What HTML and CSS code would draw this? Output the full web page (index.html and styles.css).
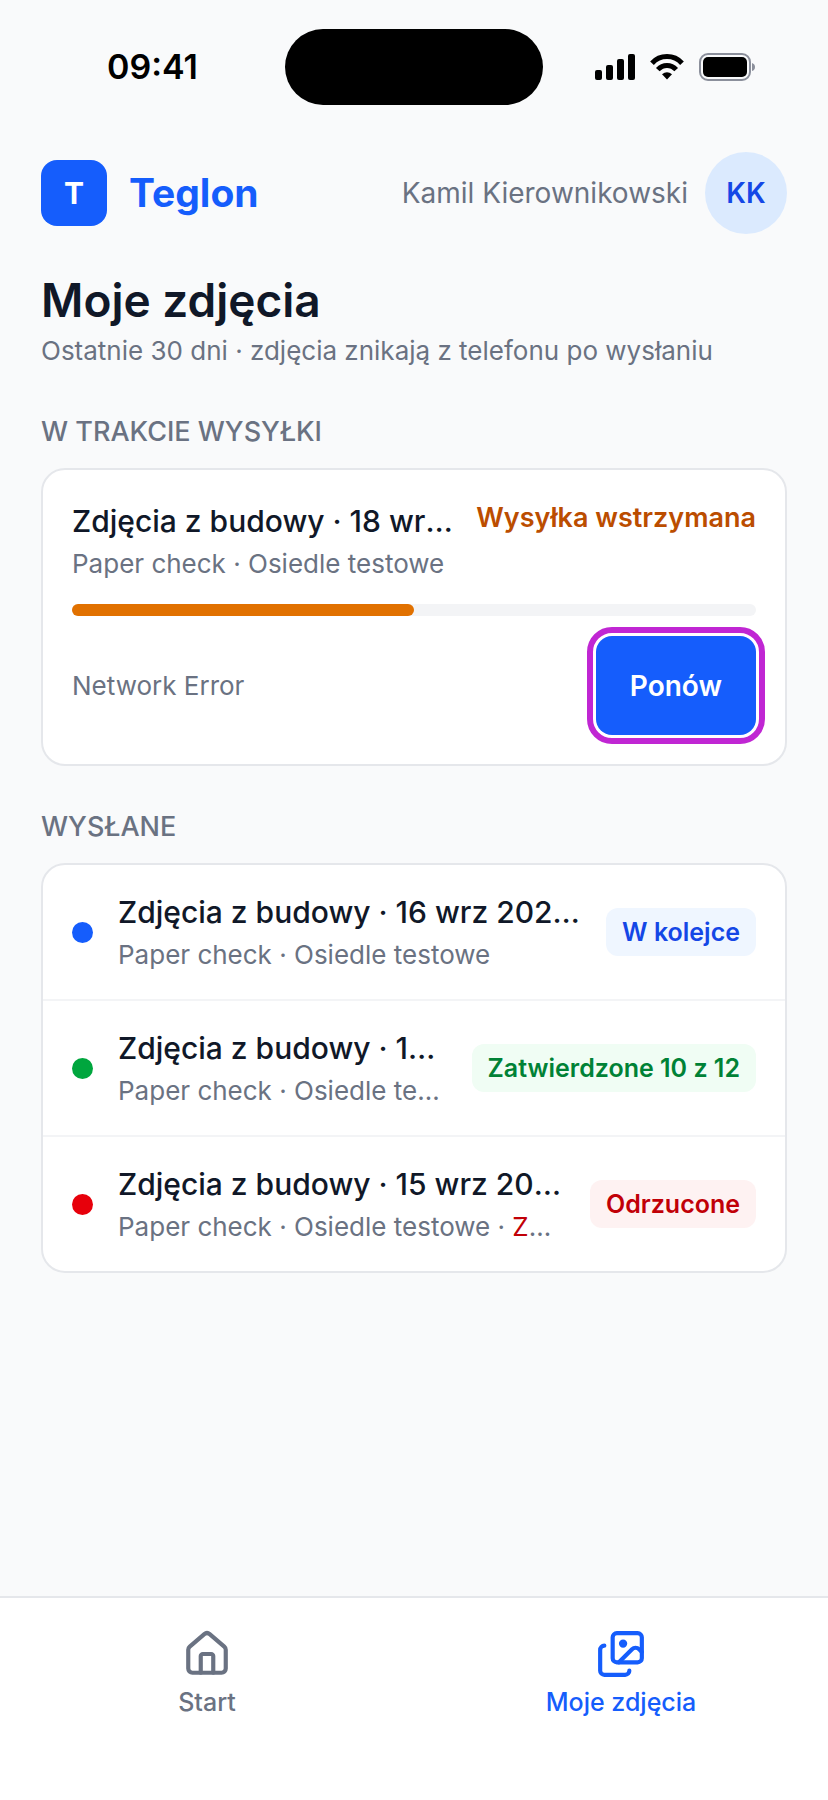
FILE: index.html
```html
<!doctype html>
<html lang="pl">

<head>
	<meta charset="utf-8">
	<meta name="viewport" content="width=device-width, initial-scale=1">
	<title>Moje zdjęcia</title>
	<link rel="stylesheet" href="styles.css">
</head>

<body>
	<div class="status-bar">
		<span class="status-time">09:41</span>
		<div class="island"></div>
		<div class="status-icons">
			<svg width="40" height="26" viewBox="0 0 40 26" fill="#000">
				<rect x="0" y="16" width="7" height="10" rx="2"/>
				<rect x="11" y="11" width="7" height="15" rx="2"/>
				<rect x="22" y="5" width="7" height="21" rx="2"/>
				<rect x="33" y="0" width="7" height="26" rx="2"/>
			</svg>
			<svg width="34" height="26" viewBox="0 0 34 26">
				<path d="M2 9.2C10 .4 24 .4 32 9.2" fill="none" stroke="#000" stroke-width="5"/>
				<path d="M7.8 15.6C13 10 21 10 26.2 15.6" fill="none" stroke="#000" stroke-width="5"/>
				<path d="M12 20.3Q17 16 22 20.3L17 25.4Z" fill="#000"/>
			</svg>
			<svg width="57" height="28" viewBox="0 0 57 28">
				<rect x="1" y="1" width="50" height="26" rx="8" fill="none" stroke="#8b8f9b" stroke-width="2"/>
				<rect x="4" y="4" width="44" height="20" rx="5" fill="#000"/>
				<path d="M53 10q3 1 3 4t-3 4z" fill="#8b8f9b"/>
			</svg>
		</div>
	</div>

	<header class="top-bar">
		<a class="brand" href="#">
			<span class="logo">T</span>
			<span class="brand-name">Teglon</span>
		</a>
		<div class="user">
			<span class="user-name">Kamil Kierownikowski</span>
			<span class="avatar">KK</span>
		</div>
	</header>

	<main class="content">
		<h1>Moje zdjęcia</h1>
		<p class="subtitle">Ostatnie 30 dni · zdjęcia znikają z telefonu po wysłaniu</p>

		<h2>W trakcie wysyłki</h2>
		<div class="card upload">
			<div class="upload-head">
				<div class="item-text">
					<p class="item-title">Zdjęcia z budowy · 18 wrz 2025, 09:41</p>
					<p class="item-place">Paper check · Osiedle testowe</p>
				</div>
				<span class="upload-status">Wysyłka wstrzymana</span>
			</div>
			<div class="progress" role="progressbar" aria-valuenow="50" aria-valuemin="0" aria-valuemax="100" aria-label="Wysyłka">
				<div class="progress-fill" style="width:50%"></div>
			</div>
			<div class="upload-foot">
				<span class="upload-error">Network Error</span>
				<button class="retry" type="button">Ponów</button>
			</div>
		</div>

		<h2>Wysłane</h2>
		<ul class="card sent">
			<li class="sent-item">
				<span class="dot dot-blue"></span>
				<div class="item-text">
					<p class="item-title">Zdjęcia z budowy · 16 wrz 2025, 09:41</p>
					<p class="item-place">Paper check · Osiedle testowe</p>
				</div>
				<span class="badge badge-blue">W kolejce</span>
			</li>
			<li class="sent-item">
				<span class="dot dot-green"></span>
				<div class="item-text">
					<p class="item-title">Zdjęcia z budowy · 15 wrz 2025, 09:41</p>
					<p class="item-place">Paper check · Osiedle testowe</p>
				</div>
				<span class="badge badge-green">Zatwierdzone 10 z 12</span>
			</li>
			<li class="sent-item">
				<span class="dot dot-red"></span>
				<div class="item-text">
					<p class="item-title">Zdjęcia z budowy · 15 wrz 2025, 09:41</p>
					<p class="item-place">Paper check · Osiedle testowe · <span class="reason">Zdjęcia</span></p>
				</div>
				<span class="badge badge-red">Odrzucone</span>
			</li>
		</ul>
	</main>

	<nav class="tab-bar">
		<a class="tab" href="#">
			<svg class="tab-icon" viewBox="0 0 24 24">
				<path d="M15 21v-8a1 1 0 0 0-1-1h-4a1 1 0 0 0-1 1v8"/>
				<path d="M3 10a2 2 0 0 1 .709-1.528l7-5.999a2 2 0 0 1 2.582 0l7 5.999A2 2 0 0 1 21 10v9a2 2 0 0 1-2 2H5a2 2 0 0 1-2-2z"/>
			</svg>
			<span>Start</span>
		</a>
		<a class="tab active" href="#">
			<svg class="tab-icon" viewBox="0 0 24 24">
				<path d="m22 11-1.296-1.296a2.4 2.4 0 0 0-3.408 0L11 16"/>
				<path d="M4 8a2 2 0 0 0-2 2v10a2 2 0 0 0 2 2h10a2 2 0 0 0 2-2"/>
				<circle cx="13" cy="7" r="1" fill="currentColor"/>
				<rect x="8" y="2" width="14" height="14" rx="2"/>
			</svg>
			<span>Moje zdjęcia</span>
		</a>
	</nav>
</body>

</html>
```
FILE: styles.css
```css
* {
	box-sizing: border-box;
}
body {
	margin: 0;
	min-height: 100vh;
	display: flex;
	flex-direction: column;
	background-color: #f9fafb;
	color: #101828;
	font-family: Inter, 'Noto Sans', sans-serif;
	font-size: 26px;
	line-height: 40px;
}
h1, h2, p, ul {
	margin: 0;
	padding: 0;
}
a {
	color: inherit;
	text-decoration: none;
}

.status-bar {
	display: grid;
	grid-template-columns: 1fr 258px 1fr;
	align-items: center;
	padding-top: 29px;
	color: #000;
}
.status-time {
	padding-left: 20px;
	text-align: center;
	font-size: 34px;
	font-weight: 600;
}
.island {
	height: 76px;
	border-radius: 38px;
	background-color: #000;
}
.status-icons {
	display: flex;
	justify-content: center;
	align-items: center;
	gap: 15px;
	padding-right: 20px;
}

.top-bar {
	display: flex;
	justify-content: space-between;
	align-items: center;
	padding: 47px 41px 0;
}
.brand, .user {
	display: flex;
	align-items: center;
}
.brand {
	gap: 22px;
	color: #155dfc;
}
.logo {
	width: 66px;
	height: 66px;
	border-radius: 16px;
	background-color: #155dfc;
	color: #fff;
	font-size: 30px;
	font-weight: 700;
	line-height: 66px;
	text-align: center;
}
.brand-name {
	font-size: 39px;
	font-weight: 700;
}
.user {
	gap: 17px;
}
.user-name {
	color: #6a7282;
	font-size: 28px;
}
.avatar {
	width: 82px;
	height: 82px;
	border-radius: 50%;
	background-color: #dbeafe;
	color: #1447e6;
	font-size: 28px;
	font-weight: 600;
	line-height: 82px;
	text-align: center;
}

.content {
	flex: 1;
	padding: 36px 41px;
}
h1 {
	margin-bottom: 1px;
	font-size: 46px;
	font-weight: 600;
	line-height: 60px;
}
.subtitle {
	color: #6a7282;
}
h2 {
	margin-top: 41px;
	margin-bottom: 16px;
	color: #6a7282;
	font-size: 27px;
	font-weight: 500;
	text-transform: uppercase;
}
.card {
	border: 2px solid #e5e7eb;
	border-radius: 24px;
	background-color: #fff;
}
.upload {
	padding: 28px 29px 29px;
}
.upload-head {
	display: flex;
	gap: 20px;
}
.item-text {
	flex: 1;
	min-width: 0;
}
.item-title, .item-place {
	overflow: hidden;
	text-overflow: ellipsis;
	white-space: nowrap;
}
.item-title {
	font-size: 30px;
	font-weight: 500;
	line-height: 46px;
}
.item-place {
	color: #6a7282;
}
.upload-status {
	color: #bb4d00;
	font-size: 27px;
	font-weight: 600;
}
.progress {
	height: 12px;
	margin-top: 20px;
	margin-bottom: 20px;
	border-radius: 6px;
	background-color: #f3f4f6;
}
.progress-fill {
	height: 100%;
	border-radius: 6px;
	background-color: #e17100;
}
.upload-foot {
	display: flex;
	justify-content: space-between;
	align-items: center;
}
.upload-error {
	color: #6a7282;
}
.retry {
	height: 99px;
	padding: 0 34px;
	border: none;
	border-radius: 16px;
	outline: 6px solid #c026d3;
	outline-offset: 3px;
	background-color: #155dfc;
	color: #fff;
	font-family: inherit;
	font-size: 28px;
	font-weight: 600;
	cursor: pointer;
}

.sent {
	list-style: none;
}
.sent-item {
	display: flex;
	align-items: center;
	gap: 25px;
	padding: 24px 29px;
}
.sent-item + .sent-item {
	border-top: 2px solid #f3f4f6;
}
.dot {
	width: 21px;
	height: 21px;
	border-radius: 50%;
}
.dot-blue {
	background-color: #155dfc;
}
.dot-green {
	background-color: #00a63e;
}
.dot-red {
	background-color: #e7000b;
}
.badge {
	padding: 0 16px;
	border-radius: 12px;
	font-size: 25px;
	font-weight: 600;
	line-height: 48px;
}
.badge-blue {
	background-color: #eff6ff;
	color: #1447e6;
}
.badge-green {
	background-color: #f0fdf4;
	color: #008236;
}
.badge-red {
	background-color: #fef2f2;
	color: #c10007;
}
.reason {
	color: #c10007;
}

.tab-bar {
	display: flex;
	padding: 31px 0 78px;
	border-top: 2px solid #e5e7eb;
	background-color: #fff;
}
.tab {
	flex: 1;
	display: flex;
	flex-direction: column;
	align-items: center;
	gap: 3px;
	color: #6a7282;
	font-size: 25px;
	font-weight: 500;
}
.tab.active {
	color: #155dfc;
}
.tab-icon {
	width: 50px;
	height: 50px;
	fill: none;
	stroke: currentColor;
	stroke-width: 2;
	stroke-linecap: round;
	stroke-linejoin: round;
}
```
